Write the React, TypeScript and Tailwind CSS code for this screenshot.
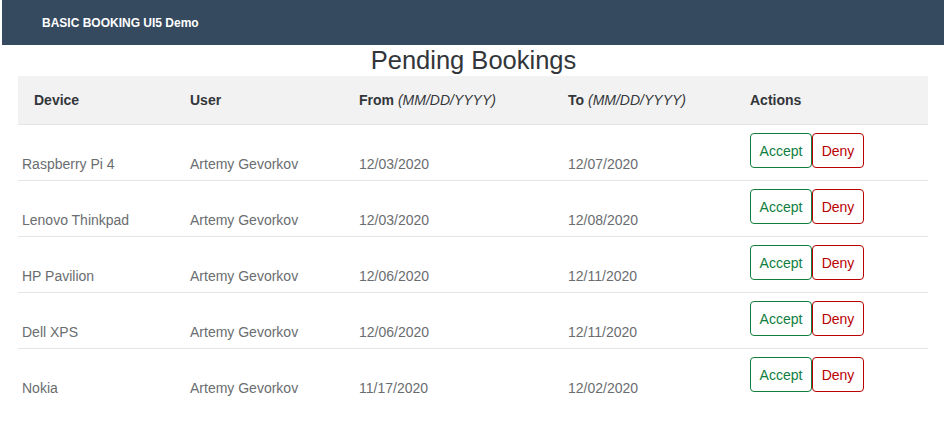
import React from "react";

const rows = [
  { device: "Raspberry Pi 4", user: "Artemy Gevorkov", from: "12/03/2020", to: "12/07/2020" },
  { device: "Lenovo Thinkpad", user: "Artemy Gevorkov", from: "12/03/2020", to: "12/08/2020" },
  { device: "HP Pavilion", user: "Artemy Gevorkov", from: "12/06/2020", to: "12/11/2020" },
  { device: "Dell XPS", user: "Artemy Gevorkov", from: "12/06/2020", to: "12/11/2020" },
  { device: "Nokia", user: "Artemy Gevorkov", from: "11/17/2020", to: "12/02/2020" },
];

const cols = "grid grid-cols-[172px_169px_209px_182px_178px]";

export default function App() {
  return (
    <div className="w-[947px] h-[422px] bg-white overflow-hidden" style={{ fontFamily: '"Liberation Sans", Arial, sans-serif' }}>
      <header className="ml-[2px] mr-[3px] h-[45px] bg-[#354a5f] flex items-center pl-[40px]">
        <span className="text-white text-[12px] font-bold">BASIC BOOKING UI5 Demo</span>
      </header>
      <h1 className="h-[31px] text-center text-[25.5px] leading-[31px] text-[#32363a]">Pending Bookings</h1>
      <div className="ml-[18px] w-[910px]">
        <div className={`${cols} h-[49px] bg-[#f2f2f2] border-b border-[#e5e5e5] items-center text-[14px] text-[#32363a]`}>
          <div className="pl-[16px] font-bold">Device</div>
          <div className="font-bold">User</div>
          <div>
            <span className="font-bold">From</span> <span className="italic">(MM/DD/YYYY)</span>
          </div>
          <div>
            <span className="font-bold">To</span> <span className="italic">(MM/DD/YYYY)</span>
          </div>
          <div className="font-bold">Actions</div>
        </div>
        {rows.map((r, i) => (
          <div
            key={i}
            className={`${cols} h-[56px] text-[14px] text-[#6a6d70] ${i < rows.length - 1 ? "border-b border-[#e5e5e5]" : ""}`}
          >
            <div className="pl-[4px] pt-[29px]">{r.device}</div>
            <div className="pt-[29px]">{r.user}</div>
            <div className="pt-[29px]">{r.from}</div>
            <div className="pt-[29px]">{r.to}</div>
            <div className="pt-[8px] flex">
              <button className="w-[62px] h-[35px] pt-[1px] border border-[#107e3e] rounded-[4px] text-[#107e3e] text-[14px] bg-white">
                Accept
              </button>
              <button className="w-[52px] h-[35px] pt-[1px] border border-[#bb0000] rounded-[4px] text-[#bb0000] text-[14px] bg-white">
                Deny
              </button>
            </div>
          </div>
        ))}
      </div>
    </div>
  );
}
